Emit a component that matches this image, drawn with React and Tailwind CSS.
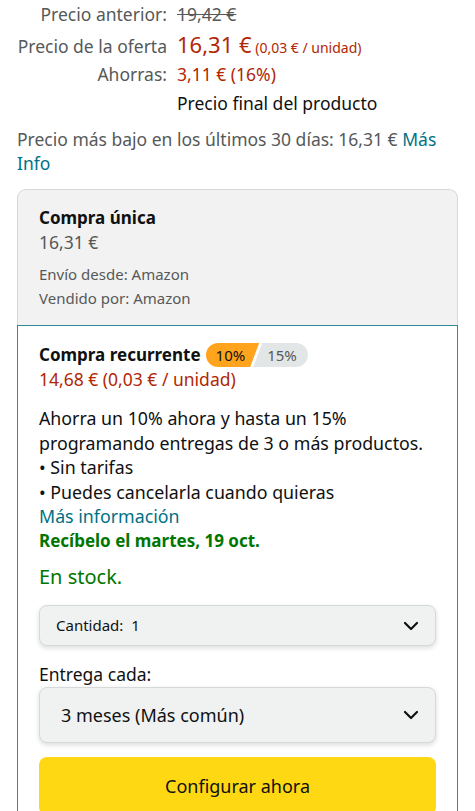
import React from 'react';

const font = { fontFamily: '"Noto Sans", "Open Sans", sans-serif' };

const Chevron = () => (
  <svg width="20" height="20" viewBox="0 0 20 20" fill="none">
    <path d="M4 7l6 6 6-6" stroke="#0F1111" strokeWidth="2.2" strokeLinecap="round" strokeLinejoin="round" />
  </svg>
);

const PriceRow = ({ label, children }) => (
  <div className="flex items-baseline">
    <div className="w-[150px] shrink-0 text-right text-[#565959] text-[17.5px]">{label}</div>
    <div className="pl-[10px]">{children}</div>
  </div>
);

const App = () => {
  return (
    <div className="w-[475px] h-[811px] overflow-hidden bg-white text-[#0F1111]" style={font}>
      <div className="px-[17px]">
        <div className="flex flex-col">
          <div className="h-[29px] flex items-center">
            <PriceRow label="Precio anterior:">
              <span className="text-[17.5px] text-[#565959] line-through">19,42 €</span>
            </PriceRow>
          </div>
          <div className="h-[31px] flex items-center">
            <PriceRow label="Precio de la oferta">
              <span className="text-[22px] text-[#B12704]">16,31 €</span>
              <span className="text-[14px] text-[#B12704]"> (0,03 € / unidad)</span>
            </PriceRow>
          </div>
          <div className="h-[29px] flex items-center">
            <PriceRow label="Ahorras:">
              <span className="text-[17.5px] text-[#B12704]">3,11 € (16%)</span>
            </PriceRow>
          </div>
          <div className="h-[29px] flex items-center pl-[160px] text-[17.5px]">Precio final del producto</div>
        </div>
        <p className="mt-[9px] text-[17.5px] leading-[24px] text-[#565959]">
          Precio más bajo en los últimos 30 días: 16,31 € <span className="text-[#007185]">Más Info</span>
        </p>

        <div className="mt-[14px] rounded-t-[9px] border border-b-0 border-[#D5D9D9] bg-[#F2F2F2] px-[21px] pt-[16px] pb-[15px]">
          <div className="text-[17px] font-bold leading-[24px]">Compra única</div>
          <div className="text-[17.5px] leading-[24px] text-[#565959]">16,31 €</div>
          <div className="mt-[8px] text-[15px] leading-[24px] text-[#565959]">Envío desde: Amazon</div>
          <div className="text-[15px] leading-[24px] text-[#565959]">Vendido por: Amazon</div>
        </div>

        <div className="border border-[#2F8A99] px-[21px] pt-[17px] pb-[20px]">
          <div className="flex items-center gap-[5px]">
            <span className="text-[17px] font-bold leading-[24px]">Compra recurrente</span>
            <div className="flex h-[24px] rounded-full overflow-hidden text-[15px]">
              <span className="flex items-center pl-[10px] pr-[14px] bg-[#FFA41C] [clip-path:polygon(0_0,100%_0,calc(100%-9px)_100%,0_100%)]">10%</span>
              <span className="flex items-center -ml-[6px] pl-[14px] pr-[11px] bg-[#E3E6E6] text-[#565959] [clip-path:polygon(9px_0,100%_0,100%_100%,0_100%)]">15%</span>
            </div>
          </div>
          <div className="text-[17.5px] leading-[24px] text-[#B12704]">14,68 € (0,03 € / unidad)</div>

          <div className="mt-[15px] text-[17.8px] leading-[24.5px]">
            <div>Ahorra un 10% ahora y hasta un 15% programando entregas de 3 o más productos.</div>
            <div>• Sin tarifas</div>
            <div>• Puedes cancelarla cuando quieras</div>
            <div className="text-[#007185]">Más información</div>
            <div className="font-bold text-[#007600] text-[17px]">Recíbelo el martes, 19 oct.</div>
          </div>

          <div className="mt-[10px] text-[20px] leading-[28px] text-[#007600]">En stock.</div>

          <div className="mt-[14px] h-[41px] flex items-center justify-between rounded-[8px] border border-[#D5D9D9] bg-[#F0F2F2] pl-[16px] pr-[14px] shadow-[0_2px_5px_rgba(15,17,17,0.15)]">
            <span className="text-[15px]">Cantidad:&nbsp; 1</span>
            <Chevron />
          </div>

          <div className="mt-[16px] text-[17.5px] leading-[24px]">Entrega cada:</div>

          <div className="mt-[1px] h-[56px] flex items-center justify-between rounded-[8px] border border-[#D5D9D9] bg-[#F0F2F2] pl-[21px] pr-[14px] shadow-[0_2px_5px_rgba(15,17,17,0.15)]">
            <span className="text-[18px]">3 meses (Más común)</span>
            <Chevron />
          </div>

          <div className="mt-[14px] h-[58px] flex items-center justify-center rounded-[8px] bg-[#FFD814] text-[18px]">
            Configurar ahora
          </div>
        </div>
      </div>
    </div>
  );
};

export default App;
